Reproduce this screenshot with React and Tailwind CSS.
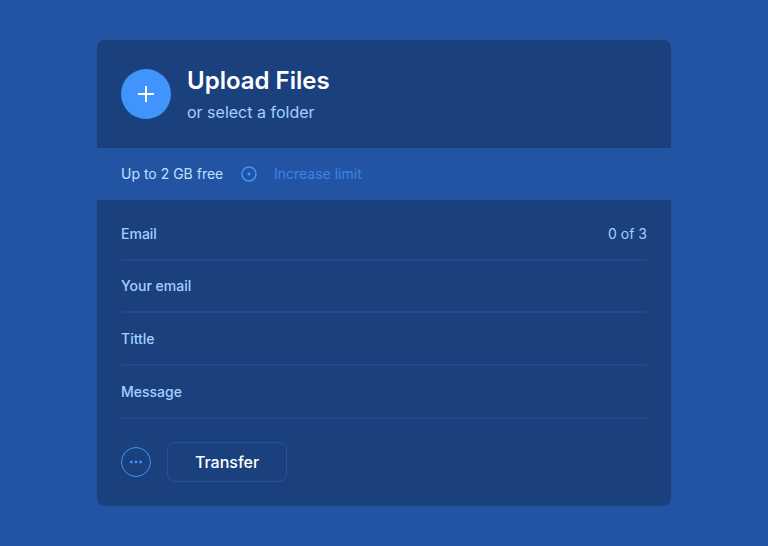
const fields = [
  { label: "Email", count: "0 of 3", size: "h-[61px] pt-[8px]" },
  { label: "Your email", size: "h-[52px]" },
  { label: "Tittle", size: "h-[53px]" },
  { label: "Message", size: "h-[53px]" },
];

function UploadHeader() {
  return (
    <header className="flex h-[108px] items-center gap-4 rounded-t-lg bg-[#1a417e] px-6">
      <button aria-label="Upload files" className="flex size-[50px] shrink-0 items-center justify-center rounded-full bg-[#4094fb]">
        <svg width="18" height="18" viewBox="0 0 18 18" fill="none" stroke="white" strokeWidth="2">
          <path d="M9 1v16M1 9h16" />
        </svg>
      </button>
      <div className="pt-[5px]">
        <h1 className="text-2xl leading-8 font-semibold text-white">Upload Files</h1>
        <p className="text-base leading-[31px] text-[#a3d0ff]">or select a folder</p>
      </div>
    </header>
  );
}

function LimitBar() {
  return (
    <div className="flex h-[52px] items-center px-6 text-sm">
      <span className="w-[120px] text-[#bfe1ff]">Up to 2 GB free</span>
      <svg width="16" height="16" viewBox="0 0 16 16" className="mr-[17px]" fill="none">
        <circle cx="8" cy="8" r="7" stroke="#4094fb" strokeWidth="1.5" />
        <circle cx="8" cy="8" r="1.6" fill="#4094fb" />
      </svg>
      <a className="text-[#3c84e7]">Increase limit</a>
    </div>
  );
}

export default function App() {
  return (
    <main className="flex h-screen justify-center bg-[#2354a3] pt-10 font-['Inter',sans-serif]">
      <section className="w-[574px]">
        <UploadHeader />
        <LimitBar />
        <form className="h-[306px] rounded-b-lg bg-[#1a417e] px-6">
          {fields.map((field) => (
            <div key={field.label} className={`flex items-center justify-between border-b-2 border-[#1f4a8c] text-sm text-[#a3d0ff] ${field.size}`}>
              <span className="font-medium">{field.label}</span>
              {field.count && <span>{field.count}</span>}
            </div>
          ))}
          <div className="flex items-center gap-4 pt-[23px]">
            <button type="button" aria-label="More options">
              <svg width="30" height="30" viewBox="0 0 30 30" className="block">
                <circle cx="15" cy="15" r="14.5" fill="none" stroke="#4094fb" />
                <g fill="#4094fb">
                  <circle cx="10.3" cy="15" r="1.4" />
                  <circle cx="15" cy="15" r="1.4" />
                  <circle cx="19.7" cy="15" r="1.4" />
                </g>
              </svg>
            </button>
            <button type="button" className="h-10 w-[120px] rounded-lg border border-[#2354a3] text-base font-medium text-white">
              Transfer
            </button>
          </div>
        </form>
      </section>
    </main>
  );
}
